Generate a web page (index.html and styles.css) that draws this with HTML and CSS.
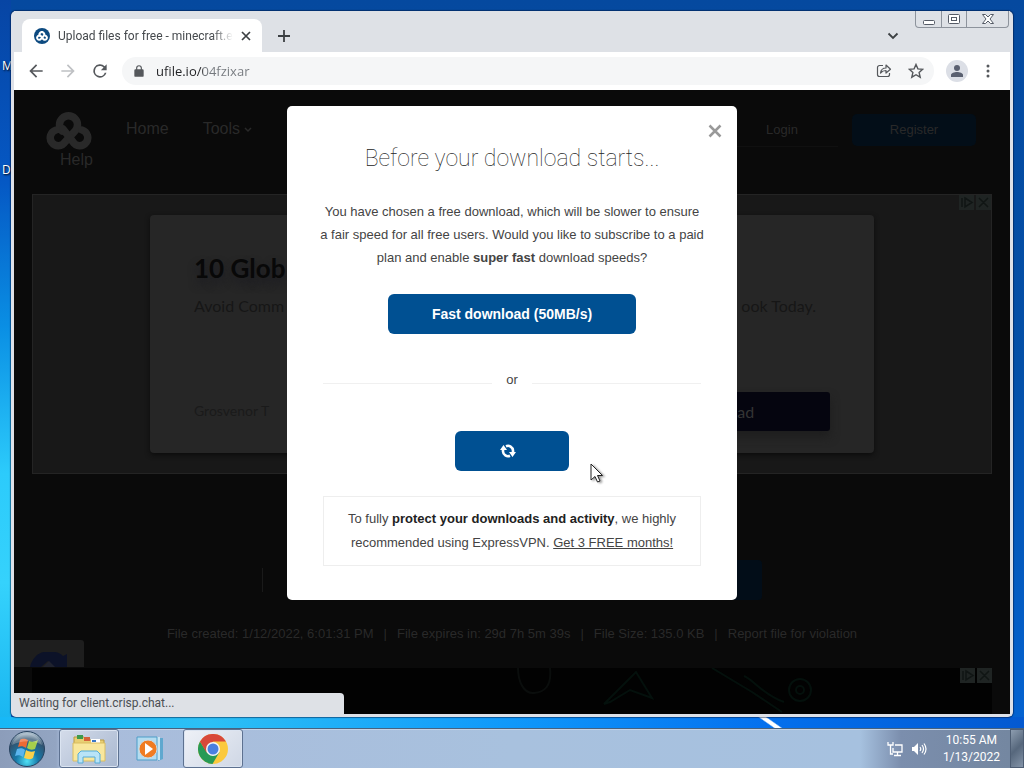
FILE: index.html
```html
<!DOCTYPE html>
<html lang="en">
<head>
    <meta charset="UTF-8">
    <title>Upload files for free - ufile.io</title>
    <link rel="stylesheet" href="styles.css">
</head>
<body>
    <svg class="symbols" aria-hidden="true">
        <symbol id="knot" viewBox="0 0 46 38">
            <g fill="none" stroke="currentColor" stroke-width="7.500" stroke-linecap="round">
                <path d="M16 19a9 9 0 1 1 13 0L19 30a8 8 0 1 1-9-12"/>
                <path d="M17 17l10 13a8 8 0 1 0 9-12"/>
            </g>
        </symbol>
        <symbol id="adchoices" viewBox="0 0 32 15">
            <path d="M0 0h15v15H0zM17 0h15v15H17z" fill="#1f2423"/>
            <path d="M3 3v9M6 3l7 4.500-7 4.500zM20 3l9 9M29 3l-9 9" fill="none" stroke="#101514" stroke-width="1.500"/>
        </symbol>
    </svg>

    <main class="desktop">
        <span class="desktop-label label-m">M</span>
        <span class="desktop-label label-d">D</span>

        <div class="window">
            <div class="tab-strip">
                <div class="tab">
                    <span class="favicon"><svg width="12" height="10"><use href="#knot"/></svg></span>
                    <span class="tab-title">Upload files for free - minecraft.e</span>
                    <button class="icon-btn" aria-label="Close tab">
                        <svg width="10" height="10" viewBox="0 0 10 10"><path d="M1 1l8 8M9 1L1 9" stroke="#3c4043" stroke-width="1.700"/></svg>
                    </button>
                </div>
                <button class="icon-btn new-tab" aria-label="New tab">
                    <svg width="12" height="12" viewBox="0 0 12 12"><path d="M6 0v12M0 6h12" stroke="#3c4043" stroke-width="1.800"/></svg>
                </button>
                <button class="icon-btn tab-search" aria-label="Search tabs">
                    <svg width="12" height="8" viewBox="0 0 12 8"><path d="M1.500 1.500L6 6l4.500-4.500" fill="none" stroke="#3c4043" stroke-width="1.800"/></svg>
                </button>
                <div class="window-controls">
                    <button aria-label="Minimize">
                        <svg width="12" height="12" viewBox="0 0 12 12"><rect x=".5" y="7.500" width="11" height="4" rx="1" fill="#fff" stroke="#555b66"/></svg>
                    </button>
                    <button aria-label="Maximize">
                        <svg width="12" height="10" viewBox="0 0 12 10"><rect x=".5" y=".5" width="11" height="9" rx="1" fill="#fff" stroke="#555b66"/><rect x="3.500" y="3.500" width="5" height="3" fill="none" stroke="#555b66"/></svg>
                    </button>
                    <button class="close" aria-label="Close">
                        <svg width="12" height="10" viewBox="0 0 12 10"><path d="M.5.5h3L6 3 8.500.5h3L8 5l3.500 4.500h-3L6 7 3.500 9.500h-3L4 5z" fill="#fff" stroke="#555b66"/></svg>
                    </button>
                </div>
            </div>

            <div class="toolbar">
                <button class="icon-btn" aria-label="Back">
                    <svg width="20" height="20" viewBox="0 0 24 24"><path d="M20 11H7.800l5.600-5.600L12 4l-8 8 8 8 1.400-1.400L7.800 13H20z" fill="#55585c"/></svg>
                </button>
                <button class="icon-btn" aria-label="Forward">
                    <svg width="20" height="20" viewBox="0 0 24 24"><path d="M4 13h12.200l-5.600 5.600L12 20l8-8-8-8-1.400 1.400 5.600 5.600H4z" fill="#bfc1c4"/></svg>
                </button>
                <button class="icon-btn" aria-label="Reload">
                    <svg width="20" height="20" viewBox="0 0 24 24"><path d="M17.650 6.350A8 8 0 1 0 19.730 14h-2.080A6 6 0 1 1 12 6c1.660 0 3.140.69 4.220 1.780L13 11h7V4z" fill="#55585c"/></svg>
                </button>
                <div class="omnibox">
                    <svg width="14" height="14" viewBox="0 0 24 24"><path d="M18 9h-1V7A5 5 0 0 0 7 7v2H6a2 2 0 0 0-2 2v9a2 2 0 0 0 2 2h12a2 2 0 0 0 2-2v-9a2 2 0 0 0-2-2zM9 9V7a3 3 0 0 1 6 0v2z" fill="#55585c"/></svg>
                    <input class="address" type="text" aria-label="Address" value="ufile.io/04fzixar">
                    <button class="icon-btn" aria-label="Share">
                        <svg width="16" height="16" viewBox="0 0 16 16"><path d="M7 2.500H3.500a2 2 0 0 0-2 2v7a2 2 0 0 0 2 2h8a2 2 0 0 0 2-2V10M4.500 10c.5-3.500 2.500-5 5.500-5V2l4.500 4.200L10 10V7.500c-2.500 0-4 .7-5.500 2.500z" fill="none" stroke="#55585c" stroke-width="1.200" stroke-linejoin="round"/></svg>
                    </button>
                    <button class="icon-btn" aria-label="Bookmark">
                        <svg width="16" height="16" viewBox="0 0 16 16"><path d="M8 1.500l1.900 4.400 4.800.4-3.600 3.200 1.100 4.700L8 11.700l-4.200 2.500 1.100-4.700-3.600-3.200 4.800-.4z" fill="none" stroke="#55585c" stroke-width="1.400"/></svg>
                    </button>
                </div>
                <button class="icon-btn avatar" aria-label="Profile">
                    <svg width="14" height="14" viewBox="0 0 14 14"><circle cx="7" cy="4" r="3" fill="#5a6070"/><path d="M1 13v-2c0-2 3.500-3 6-3s6 1 6 3v2z" fill="#5a6070"/></svg>
                </button>
                <button class="icon-btn" aria-label="Menu">
                    <svg width="4" height="14" viewBox="0 0 4 14" fill="#55585c"><circle cx="2" cy="2" r="1.500"/><circle cx="2" cy="7" r="1.500"/><circle cx="2" cy="12" r="1.500"/></svg>
                </button>
            </div>

            <div class="viewport">
                <div class="page">
                    <header class="site-header">
                        <nav class="site-nav">
                            <a href="#" class="logo" aria-label="ufile"><svg width="46" height="38"><use href="#knot"/></svg></a>
                            <a href="#">Home</a>
                            <a href="#">Tools <svg width="8" height="6" viewBox="0 0 8 6"><path d="M1 1l3 3 3-3" fill="none" stroke="currentColor" stroke-width="1.500"/></svg></a>
                            <a href="#" class="help">Help</a>
                        </nav>
                        <div class="account">
                            <a href="#" class="login">Login</a>
                            <a href="#" class="register">Register</a>
                        </div>
                    </header>

                    <section class="ad">
                        <svg class="adchoices" width="32" height="15"><use href="#adchoices"/></svg>
                        <div class="ad-card">
                            <h2>10 Glob</h2>
                            <p class="ad-text"><span>Avoid Comm</span><span>ook Today.</span></p>
                            <div class="ad-footer">
                                <span>Grosvenor T</span>
                                <button class="ad-btn">Download</button>
                            </div>
                        </div>
                    </section>

                    <div class="link-row">
                        <input type="text" aria-label="File link">
                        <button aria-label="Copy link"></button>
                    </div>

                    <div class="file-info">
                        <span>File created: 1/12/2022, 6:01:31 PM</span><i>|</i>
                        <span>File expires in: 29d 7h 5m 39s</span><i>|</i>
                        <span>File Size: 135.0 KB</span><i>|</i>
                        <a href="#">Report file for violation</a>
                    </div>

                    <section class="ad-bottom">
                        <svg class="adchoices" width="32" height="15"><use href="#adchoices"/></svg>
                        <svg width="340" height="46" viewBox="0 0 340 46" fill="none" stroke="#04100c" stroke-width="2">
                            <path d="M20 0c0 14 6 26 16 25s18-6 16-25" stroke="#0a0d0c"/>
                            <path d="M106 36l32-32 16 26-22-8-20 12z"/>
                            <path d="M214 0l40 24 30 20M246 8c10 4 18 18 40 26"/>
                            <circle cx="302" cy="22" r="11"/><circle cx="302" cy="22" r="4"/>
                        </svg>
                    </section>
                </div>

                <div class="captcha">
                    <svg width="38" height="20" viewBox="0 0 38 20"><path d="M0 20C2 12 7 6 14 5h10c4 0 7 2 9 4l4-2v13H24l-6-6-7 6z" fill="#0c1228"/><path d="M13 20l6-6 6 6z" fill="#20232f"/></svg>
                </div>

                <div class="overlay">
                    <div class="modal" role="dialog" aria-labelledby="modal-title">
                        <button class="icon-btn modal-close" aria-label="Close">
                            <svg width="14" height="14" viewBox="0 0 14 14"><path d="M1.500 1.500l11 11M12.500 1.500l-11 11" stroke="#999" stroke-width="2.500"/></svg>
                        </button>
                        <h1 id="modal-title">Before your download starts...</h1>
                        <p class="intro">
                            You have chosen a free download, which will be slower to ensure<br>
                            a fair speed for all free users. Would you like to subscribe to a paid<br>
                            plan and enable <b>super fast</b> download speeds?
                        </p>
                        <button class="btn btn-fast">Fast download (50MB/s)</button>
                        <div class="or">or</div>
                        <button class="btn btn-slow" aria-label="Loading">
                            <svg width="16" height="14" viewBox="0 0 16 14"><g fill="none" stroke="#fff" stroke-width="2.600"><path d="M3 5v2.500A5 5 0 0 0 10 11.800"/><path d="M13 9V6.500A5 5 0 0 0 6 2.200"/></g><path d="M0 6l3.500-5 3.500 5zM16 8l-3.500 5L9 8z" fill="#fff"/></svg>
                        </button>
                        <p class="vpn">
                            To fully <b>protect your downloads and activity</b>, we highly<br>
                            recommended using ExpressVPN. <a href="#">Get 3 FREE months!</a>
                        </p>
                    </div>
                </div>

                <div class="status-bubble">Waiting for client.crisp.chat...</div>
            </div>
        </div>
    </main>

    <footer class="taskbar">
        <button class="start" aria-label="Start">
            <svg width="38" height="38" viewBox="0 0 38 38">
                <defs>
                    <radialGradient id="orb" cx="50%" cy="85%" r="80%">
                        <stop offset="0" stop-color="#4fe0f5"/>
                        <stop offset=".4" stop-color="#1678a8"/>
                        <stop offset=".8" stop-color="#31536f"/>
                        <stop offset="1" stop-color="#a9bccb"/>
                    </radialGradient>
                </defs>
                <circle cx="19" cy="19" r="17.500" fill="url(#orb)" stroke="#27425f"/>
                <path d="M12 10c3-2 5-1 8 0l-2 8c-3-2-5-2-8-1z" fill="#ee6a34"/>
                <path d="M21 11c3 1 5 1 9-1l-3 9c-3 1-5 1-8-1z" fill="#a5cf4c"/>
                <path d="M9 19c3-1 6-1 8 1l-2 7c-3-2-5-2-8-1z" fill="#5bb5ee"/>
                <path d="M18 20c3 2 6 2 9 1l-2 7c-3 2-6 1-9 0z" fill="#fbd04a"/>
                <path d="M4 15a15.500 15.500 0 0 1 30 0c-9-5-20-5-30 0z" fill="#fff" opacity=".25"/>
            </svg>
        </button>
        <button class="task active" aria-label="Windows Explorer">
            <svg width="34" height="30" viewBox="0 0 34 30">
                <path d="M2 3h10l2 3h18v20H2z" fill="#e8cf73" stroke="#b99b45"/>
                <path d="M5 1h6v4H5z" fill="#3d9a4d"/><path d="M12 3h6v4h-6z" fill="#d5623a"/><path d="M19 5h9v4h-9z" fill="#fff"/><path d="M20 6h4v2h-4z" fill="#3978c8"/>
                <path d="M1 9h32v18H1z" fill="#f8e79d" stroke="#d9bd62"/>
                <path d="M6 29V20l3-3h16l3 3v9h-5v-6H11v6z" fill="#b9e4f7" stroke="#55acd8"/>
            </svg>
        </button>
        <button class="task" aria-label="Windows Media Player">
            <svg width="30" height="26" viewBox="0 0 30 26">
                <path d="M22 2h5v21l-5 2z" fill="#5fa8cf"/><path d="M21 1h3v23h-3z" fill="#c9e6f3"/>
                <path d="M1 1h20v23H1z" fill="#b4dcf0" stroke="#4c9dc8"/>
                <circle cx="12" cy="13" r="9" fill="#f07c22" stroke="#cfd8de"/>
                <path d="M9 7l8 6-8 6z" fill="#fff"/>
            </svg>
        </button>
        <button class="task active current" aria-label="Google Chrome">
            <svg width="30" height="30" viewBox="0 0 30 30">
                <circle cx="15" cy="15" r="15" fill="#fbc93d"/>
                <path d="M2 7.500A15 15 0 0 0 14.500 30l7-12L9 18.500z" fill="#279a56"/>
                <path d="M2 7.500A15 15 0 0 1 28 7.500H15L8.500 18.500z" fill="#d8483a"/>
                <circle cx="15" cy="15" r="7" fill="#f5f5f5"/>
                <circle cx="15" cy="15" r="5.500" fill="#4a80e0"/>
            </svg>
        </button>
        <div class="tray">
            <svg width="16" height="16" viewBox="0 0 16 16" fill="none" stroke="#fff" stroke-width="1.300">
                <path d="M1 1v3h5V1M3.500 4v9H6M8 4h7v7H6V7M10.500 11v3M7 14.500h7"/>
            </svg>
            <svg width="16" height="14" viewBox="0 0 16 14">
                <path d="M1 5h2l4-4v12L3 9H1z" fill="#fff"/>
                <path d="M9 5q1.500 2 0 4M11 3q3 4 0 8M13 1.500q4 5.500 0 11" fill="none" stroke="#fff" stroke-width="1.200"/>
            </svg>
            <time class="clock" datetime="2022-01-13T10:55">10:55 AM<br>1/13/2022</time>
        </div>
        <button class="show-desktop" aria-label="Show desktop"></button>
    </footer>

    <svg class="cursor" width="16" height="22" viewBox="0 0 16 22" aria-hidden="true">
        <path d="M1 1v16l4-3.500 2.500 5.500 2.500-1-2.500-5.500h5z" fill="#fff" stroke="#222"/>
    </svg>
</body>
</html>
```

FILE: styles.css
```css
* {
    box-sizing: border-box;
}
body {
    margin: 0;
    height: 100vh;
    display: flex;
    flex-direction: column;
    overflow: hidden;
    font-family: "Liberation Sans", Arial, sans-serif;
    font-size: 13px;
}
button {
    font: inherit;
    border: 0;
    padding: 0;
    background: none;
}
a {
    color: inherit;
    text-decoration: none;
}
svg {
    display: block;
    flex: none;
}
.symbols {
    position: absolute;
    width: 0;
    height: 0;
}

/* Desktop */
.desktop {
    position: relative;
    flex: 1;
    min-height: 0;
    display: flex;
    padding: 11px;
    background:
        linear-gradient(35deg, transparent 40%, #fff 45%, #fff 56%, transparent 61%) 76% 100% / 30px 11px no-repeat,
        linear-gradient(90deg, #17b8f7, #2cc0f5 20%, #0f98fa 50%, #0470ee 75%, #0459d0) 0 100% / 100% 11px no-repeat,
        linear-gradient(180deg, #0745a4, #0558c4 25%, #0a8fe4 45%, #2ccbfb 65%, #35d2fc 80%, #18b4f0) 0 0 / 11px 100% no-repeat,
        linear-gradient(180deg, #05499f, #0450a8 50%, #0463d2);
}
.desktop-label {
    position: absolute;
    font-family: "Open Sans", sans-serif;
    font-size: 12px;
    line-height: 16px;
    color: #fff;
    text-shadow: 1px 1px 2px #000;
}
.label-m {
    left: 2px;
    top: 58px;
}
.label-d {
    left: 2px;
    top: 162px;
}

/* Browser window */
.window {
    position: relative;
    flex: 1;
    min-width: 0;
    display: flex;
    flex-direction: column;
    border: 3px solid #dee1e8;
    border-top: 0;
    border-radius: 5px;
    background: #dee1e6;
    box-shadow: 0 0 1px 1px rgba(0, 20, 60, .5);
}
.icon-btn {
    display: grid;
    place-items: center;
    flex: none;
}
.tab-strip {
    display: flex;
    align-items: flex-start;
    height: 41px;
    padding-left: 8px;
    background: #dee1e6;
}
.tab {
    display: flex;
    align-items: center;
    gap: 8px;
    width: 240px;
    height: 33px;
    margin-top: 8px;
    padding: 0 11px 0 12px;
    border-radius: 8px 8px 0 0;
    background: #fff;
}
.favicon {
    display: grid;
    place-items: center;
    width: 16px;
    height: 16px;
    border-radius: 50%;
    background: #0d4a80;
    color: #fff;
}
.tab-title {
    flex: 1;
    overflow: hidden;
    white-space: nowrap;
    font-family: Roboto, sans-serif;
    font-size: 12px;
    color: #45494d;
    mask-image: linear-gradient(90deg, #000 88%, transparent);
}
.new-tab {
    margin: 19px 0 0 16px;
}
.tab-search {
    margin: 21px 16px 0 auto;
}
.window-controls {
    display: flex;
    height: 17px;
    margin-right: 1px;
    border: 1px solid #8d939c;
    border-top: 0;
    border-radius: 0 0 4px 4px;
}
.window-controls button {
    display: grid;
    place-items: center;
    width: 25px;
}
.window-controls button + button {
    border-left: 1px solid #8d939c;
}
.window-controls .close {
    width: 42px;
}
.toolbar {
    display: flex;
    align-items: center;
    gap: 12px;
    height: 38px;
    padding: 0 20px 0 12px;
    background: #fff;
}
.omnibox {
    flex: 1;
    display: flex;
    align-items: center;
    height: 28px;
    padding: 0 10px;
    border-radius: 14px;
    background: #f5f6f7;
    gap: 16px;
}
.address {
    flex: 1;
    min-width: 0;
    margin-left: -6px;
    padding: 0;
    border: 0;
    font-family: "Open Sans", sans-serif;
    font-size: 13px;
    color: transparent;
    /* host dark, path grey */
    background: linear-gradient(90deg, #202124 47px, #74787d 47px);
    background-clip: text;
}
.avatar {
    width: 22px;
    height: 22px;
    margin: 0 6px 0 0;
    border-radius: 50%;
    background: #dcdfe6;
}

/* Page under the overlay, colours already dimmed */
.viewport {
    position: relative;
    flex: 1;
    min-height: 0;
    overflow: hidden;
    background: #0a0a0a;
}
.page {
    display: flex;
    flex-direction: column;
    padding: 0 18px;
    color: #292929;
}
.site-header {
    display: flex;
    justify-content: space-between;
    height: 104px;
    padding: 22px 16px 0 14px;
}
.site-nav {
    display: flex;
    flex-wrap: wrap;
    align-content: flex-start;
    column-gap: 34px;
    width: 240px;
    font-size: 16px;
    line-height: 34px;
}
.site-nav svg {
    display: inline-block;
    vertical-align: middle;
}
.site-nav .logo {
    height: 38px;
}
.site-nav .logo svg {
    display: block;
}
.site-nav .help {
    margin-left: 14px;
    line-height: 20px;
}
.account {
    display: flex;
    align-items: flex-start;
    gap: 10px;
    padding-top: 2px;
    line-height: 32px;
    text-align: center;
}
.login {
    width: 112px;
    margin-right: 4px;
    border-bottom: 1px solid #101010;
}
.register {
    width: 124px;
    border-radius: 5px;
    background: #030e18;
}
.ad {
    position: relative;
    height: 280px;
    padding: 20px 117px;
    border: 1px solid #242424;
    background: #181818;
}
.adchoices {
    position: absolute;
    top: 0;
    right: 0;
}
.ad-card {
    height: 238px;
    padding: 36px 44px 0;
    border-radius: 4px;
    background: #262626;
    box-shadow: 0 2px 5px #0c0c0c;
    font-family: Lato, sans-serif;
}
.ad-card h2 {
    margin: 0 0 8px;
    font-size: 26px;
    line-height: 34px;
    color: #080808;
    text-shadow: 0 6px 8px #1c1c22;
}
.ad-text {
    display: flex;
    justify-content: space-between;
    margin: 0;
    padding-right: 14px;
    font-size: 16px;
    line-height: 26px;
    color: #161616;
}
.ad-footer {
    display: flex;
    justify-content: space-between;
    margin-top: 73px;
    font-size: 14px;
    line-height: 38px;
    color: #1a1a1a;
}
.ad-btn {
    width: 224px;
    height: 39px;
    border-radius: 3px;
    background: #05050f;
    box-shadow: 0 6px 10px #1e1e1e;
    font-size: 16px;
    color: #343434;
}
.link-row {
    display: flex;
    align-self: center;
    width: 500px;
    height: 40px;
    margin-top: 86px;
}
.link-row input {
    flex: 1;
    margin: 8px 0;
    border: 0;
    border-left: 1px solid #1a1a1a;
    background: none;
}
.link-row button {
    width: 120px;
    border-radius: 4px;
    background: #020d18;
}
.file-info {
    display: flex;
    justify-content: center;
    gap: 10px;
    margin: 24px 0;
    line-height: 20px;
    white-space: nowrap;
}
.file-info i {
    font-style: normal;
}
.ad-bottom {
    position: relative;
    height: 90px;
    padding-left: 466px;
    background: #020202;
}
.captcha {
    position: absolute;
    left: 0;
    top: 550px;
    width: 70px;
    height: 27px;
    padding: 7px 16px 0;
    border-radius: 0 3px 0 0;
    background: #1e1e1e;
}

/* Modal */
.overlay {
    position: absolute;
    inset: 0;
    display: flex;
    justify-content: center;
    align-items: flex-start;
    padding-top: 16px;
}
.modal {
    position: relative;
    display: flex;
    flex-direction: column;
    align-items: center;
    width: 450px;
    padding: 36px 36px 34px;
    border-radius: 5px;
    background: #fff;
    color: #444;
    line-height: 24px;
    text-align: center;
}
.modal-close {
    position: absolute;
    top: 18px;
    right: 15px;
}
.modal h1 {
    margin: 0 0 24px;
    font-family: Roboto, sans-serif;
    font-size: 23px;
    font-weight: 100;
    line-height: 34px;
    color: #222;
}
.intro {
    margin: 0 0 25px;
    line-height: 23px;
    white-space: nowrap;
}
.btn {
    display: grid;
    place-items: center;
    height: 40px;
    border-radius: 6px;
    background: #005092;
    color: #fff;
    font-size: 14px;
    font-weight: bold;
}
.btn-fast {
    width: 248px;
}
.btn-slow {
    width: 114px;
    padding-right: 8px;
}
.or {
    display: flex;
    align-items: center;
    gap: 14px;
    align-self: stretch;
    margin: 34px 0 39px;
}
.or::before,
.or::after {
    content: "";
    flex: 1;
    height: 7px;
    border-bottom: 1px solid #f0f0f0;
}
.vpn {
    align-self: stretch;
    margin: 25px 0 0;
    padding: 10px 0;
    border: 1px solid #eee;
}
.vpn b {
    color: #222;
}
.vpn a {
    text-decoration: underline;
}
.status-bubble {
    position: absolute;
    left: 0;
    bottom: 0;
    width: 330px;
    padding: 0 5px;
    border-radius: 0 4px 0 0;
    background: #dee1e6;
    font-family: Roboto, sans-serif;
    font-size: 12px;
    line-height: 21px;
    color: #4b4f54;
}

/* Taskbar */
.taskbar {
    display: flex;
    height: 40px;
    border-top: 1px solid #47627f;
    background: linear-gradient(90deg, #8c9dba, #93a5c2 56px, #a9bcdb 62px, #a8c1de 50%, #a6c1df 84%, #7b8ead 88%, #73869f);
    box-shadow: inset 0 1px #c3d3e8;
}
.start {
    width: 54px;
}
.start svg {
    margin: 0 auto;
}
.task {
    display: grid;
    place-items: center;
    width: 60px;
    margin-left: 2px;
    border-radius: 3px;
}
.start + .task {
    margin-left: 5px;
}
.task.active {
    border: 1px solid #5d7190;
    background: linear-gradient(135deg, #d4dcea, #a9b8d0);
    box-shadow: inset 0 0 0 1px #dbe4f1;
}
.task.current {
    background: linear-gradient(135deg, #eef1f7, #cfd7e5);
}
.tray {
    display: flex;
    align-items: center;
    gap: 8px;
    margin-left: auto;
}
.clock {
    margin: 0 10px 0 8px;
    font-family: Roboto, sans-serif;
    font-size: 12px;
    line-height: 17px;
    color: #fff;
    text-align: center;
}
.show-desktop {
    width: 14px;
    border: 1px solid #4d5d73;
    background: linear-gradient(135deg, #8d9db0, #56677c 50%, #8494a8);
}

.cursor {
    position: absolute;
    left: 590px;
    top: 463px;
    filter: drop-shadow(2px 1px 1px rgba(0, 0, 0, .4));
}
```
